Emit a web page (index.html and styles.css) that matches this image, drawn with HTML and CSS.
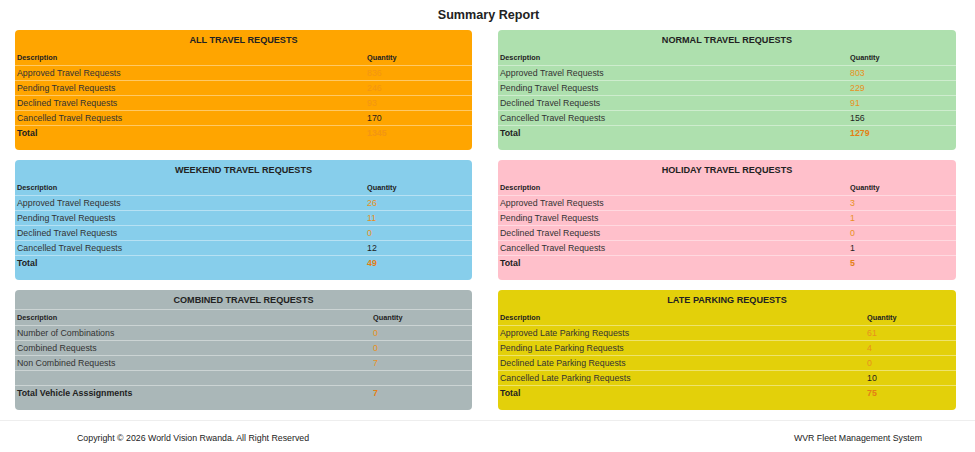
FILE: index.html
```html
<!DOCTYPE html>
<html lang="en">
<head>
<meta charset="utf-8">
<title>Summary Report</title>
<link rel="stylesheet" href="styles.css">
</head>
<body>
<header class="page-head">
  <h1 class="page-title">Summary Report</h1>
</header>
<main class="cards">
  <section class="card card-all">
    <h2 class="card-title">ALL TRAVEL REQUESTS</h2>
    <div class="row head"><span>Description</span><span>Quantity</span></div>
    <div class="row"><span>Approved Travel Requests</span><span class="num">836</span></div>
    <div class="row"><span>Pending Travel Requests</span><span class="num">246</span></div>
    <div class="row"><span>Declined Travel Requests</span><span class="num">93</span></div>
    <div class="row"><span>Cancelled Travel Requests</span><span class="plain">170</span></div>
    <div class="row total"><span>Total</span><span class="num">1345</span></div>
  </section>
  <section class="card card-normal">
    <h2 class="card-title">NORMAL TRAVEL REQUESTS</h2>
    <div class="row head"><span>Description</span><span>Quantity</span></div>
    <div class="row"><span>Approved Travel Requests</span><span class="num">803</span></div>
    <div class="row"><span>Pending Travel Requests</span><span class="num">229</span></div>
    <div class="row"><span>Declined Travel Requests</span><span class="num">91</span></div>
    <div class="row"><span>Cancelled Travel Requests</span><span class="plain">156</span></div>
    <div class="row total"><span>Total</span><span class="num">1279</span></div>
  </section>
  <section class="card card-weekend">
    <h2 class="card-title">WEEKEND TRAVEL REQUESTS</h2>
    <div class="row head"><span>Description</span><span>Quantity</span></div>
    <div class="row"><span>Approved Travel Requests</span><span class="num">26</span></div>
    <div class="row"><span>Pending Travel Requests</span><span class="num">11</span></div>
    <div class="row"><span>Declined Travel Requests</span><span class="num">0</span></div>
    <div class="row"><span>Cancelled Travel Requests</span><span class="plain">12</span></div>
    <div class="row total"><span>Total</span><span class="num">49</span></div>
  </section>
  <section class="card card-holiday">
    <h2 class="card-title">HOLIDAY TRAVEL REQUESTS</h2>
    <div class="row head"><span>Description</span><span>Quantity</span></div>
    <div class="row"><span>Approved Travel Requests</span><span class="num">3</span></div>
    <div class="row"><span>Pending Travel Requests</span><span class="num">1</span></div>
    <div class="row"><span>Declined Travel Requests</span><span class="num">0</span></div>
    <div class="row"><span>Cancelled Travel Requests</span><span class="plain">1</span></div>
    <div class="row total"><span>Total</span><span class="num">5</span></div>
  </section>
  <section class="card card-combined">
    <h2 class="card-title ruled">COMBINED TRAVEL REQUESTS</h2>
    <div class="row head"><span>Description</span><span>Quantity</span></div>
    <div class="row"><span>Number of Combinations</span><span class="num">0</span></div>
    <div class="row"><span>Combined Requests</span><span class="num">0</span></div>
    <div class="row"><span>Non Combined Requests</span><span class="num">7</span></div>
    <div class="row"><span></span><span></span></div>
    <div class="row total"><span>Total Vehicle Asssignments</span><span class="num">7</span></div>
  </section>
  <section class="card card-late">
    <h2 class="card-title">LATE PARKING REQUESTS</h2>
    <div class="row head"><span>Description</span><span>Quantity</span></div>
    <div class="row"><span>Approved Late Parking Requests</span><span class="num">61</span></div>
    <div class="row"><span>Pending Late Parking Requests</span><span class="num">4</span></div>
    <div class="row"><span>Declined Late Parking Requests</span><span class="num">0</span></div>
    <div class="row"><span>Cancelled Late Parking Requests</span><span class="plain">10</span></div>
    <div class="row total"><span>Total</span><span class="num">75</span></div>
  </section>
</main>
<footer class="footer">
  <span>Copyright © 2026 World Vision Rwanda. All Right Reserved</span>
  <span>WVR Fleet Management System</span>
</footer>
</body>
</html>
```
FILE: styles.css
```css
* { box-sizing: border-box; }
html, body { margin: 0; padding: 0; background: #fff; }
body {
  font-family: "Liberation Sans", Arial, sans-serif;
  color: #333;
  font-size: 8.8px;
}
.page-head { height: 30px; display: flex; justify-content: center; align-items: center; }
.page-title {
  margin: 0;
  font-size: 12.6px;
  line-height: 30px;
  font-weight: bold;
  color: #222;
  padding-left: 2px;
}
.cards {
  display: grid;
  grid-template-columns: 457px 458px;
  column-gap: 26px;
  row-gap: 10px;
  padding-left: 15px;
}
.card {
  border-radius: 4px;
  padding-bottom: 10px;
  display: flex;
  flex-direction: column;
  --dcol: 350px;
}
.card-all { background: #FFA500; }
.card-normal { background: #AEE0AE; }
.card-weekend { background: #87CEEB; }
.card-holiday { background: #FFC0CB; }
.card-combined { background: #AAB7B8; --dcol: 356px; }
.card-late { background: #E3D00A; --dcol: 367px; }
.card-title {
  margin: 0;
  height: 20px;
  line-height: 20px;
  text-align: center;
  font-size: 9.1px;
  font-weight: bold;
  color: #222;
}
.card-title.ruled { border-bottom: 1px solid rgba(255,255,255,0.4); line-height: 21px; }
.row {
  display: grid;
  grid-template-columns: var(--dcol) 1fr;
  height: 15px;
  align-items: center;
  border-top: 1px solid rgba(255,255,255,0.4);
  padding-left: 2px;
  line-height: 12px;
  white-space: nowrap;
}
.row > span { display: block; }
.row.head {
  border-top: none;
  font-size: 7.3px;
  font-weight: bold;
  color: #222;
}
.num { color: #e8901e; }
.plain { color: #1e1e1e; }
.row.total { font-weight: bold; color: #222; }
.row.total .num { color: #e47f14; }
.card-all .num,
.card-all .row.total .num { color: #f39612; }
.footer {
  margin-top: 10px;
  border-top: 1px solid #eee;
  display: flex;
  justify-content: space-between;
  padding: 11px 53px 0 77px;
  line-height: 12px;
  color: #222;
}
```
